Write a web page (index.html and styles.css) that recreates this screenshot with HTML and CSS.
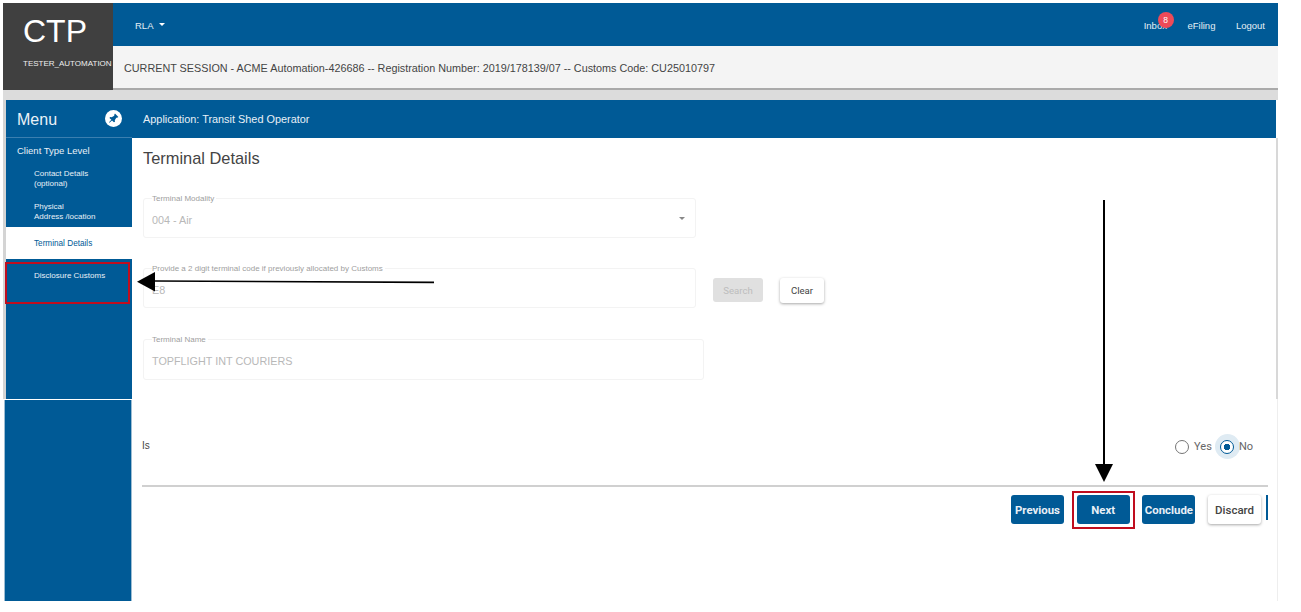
FILE: index.html
```html
<!DOCTYPE html>
<html lang="en">
<head>
<meta charset="utf-8">
<title>CTP - Terminal Details</title>
<link rel="stylesheet" href="styles.css">
</head>
<body>
<div class="app">
  <header class="top">
    <div class="logo">
      <div class="logo-name">CTP</div>
      <div class="logo-user">TESTER_AUTOMATION</div>
    </div>
    <div class="top-right">
      <nav class="nav">
        <div class="nav-left">RLA <span class="caret"></span></div>
        <div class="nav-links">
          <span class="inbox">Inbox<span class="badge">8</span></span>
          <span>eFiling</span>
          <span>Logout</span>
        </div>
      </nav>
      <div class="session">CURRENT SESSION - ACME Automation-426686 -- Registration Number: 2019/178139/07 -- Customs Code: CU25010797</div>
    </div>
  </header>

  <div class="work">
    <aside class="side">
      <div class="side-upper">
        <div class="menu-head">
          <span>Menu</span>
          <svg class="menu-icon" viewBox="0 0 16 16" aria-hidden="true"><circle cx="8" cy="8" r="8" fill="#fff"/><path d="M9.4 3.4 12.6 6.6 11.4 7.4 10.6 7.2 9.2 9.6 9.4 11 8.4 11.6 6.6 9.8 4.2 12 3.8 11.6 6 9.2 4.2 7.6 4.8 6.6 6.2 6.8 8.8 5.4 8.6 4.6z" fill="#005a96"/></svg>
        </div>
        <div class="menu-title">Client Type Level</div>
        <ul class="menu-list">
          <li class="item item-contact">Contact Details<br>(optional)</li>
          <li class="item item-physical">Physical<br>Address /location</li>
          <li class="item item-active">Terminal Details</li>
          <li class="item item-disclosure">Disclosure Customs</li>
        </ul>
      </div>
      <div class="side-lower"></div>
    </aside>

    <main class="main">
      <div class="app-bar">Application: Transit Shed Operator</div>
      <div class="panel">
        <h1 class="title">Terminal Details</h1>

        <fieldset class="field field-std">
          <legend>Terminal Modality</legend>
          <div class="value value-select">004 - Air <span class="select-caret"></span></div>
        </fieldset>

        <div class="field-row">
          <fieldset class="field field-std">
            <legend>Provide a 2 digit terminal code if previously allocated by Customs</legend>
            <div class="value">E8</div>
          </fieldset>
          <button class="btn btn-disabled" type="button">Search</button>
          <button class="btn btn-light btn-clear" type="button">Clear</button>
        </div>

        <fieldset class="field field-wide">
          <legend>Terminal Name</legend>
          <div class="value">TOPFLIGHT INT COURIERS</div>
        </fieldset>
      </div>

      <div class="panel-lower">
        <div class="question">
          <span>Is</span>
          <div class="radios">
            <span class="radio"></span><span class="radio-label">Yes</span>
            <span class="radio-halo"><span class="radio radio-on"></span></span><span class="radio-label radio-label-on">No</span>
          </div>
        </div>
        <div class="actions">
          <button class="btn btn-primary" type="button">Previous</button>
          <button class="btn btn-primary" type="button">Next</button>
          <button class="btn btn-primary" type="button">Conclude</button>
          <button class="btn btn-light btn-discard" type="button">Discard</button>
          <span class="sliver"></span>
        </div>
      </div>
    </main>
  </div>
</div>

<div class="mark mark-menu"></div>
<div class="mark mark-next"></div>
<svg class="arrow arrow-h" viewBox="0 0 298 20" aria-hidden="true"><path d="M18 9 297 10.4" stroke="#000" stroke-width="1.6" fill="none"/><path d="M0 9.7 18 0V19.5z" fill="#000"/></svg>
<svg class="arrow arrow-v" viewBox="0 0 20 283" aria-hidden="true"><path d="M10 0V266" stroke="#000" stroke-width="2" fill="none"/><path d="M1 264H19L10 282z" fill="#000"/></svg>
</body>
</html>
```
FILE: styles.css
```css
* { box-sizing: border-box; }
html, body { margin: 0; padding: 0; background: #fff; }
body {
  height: 612px;
  overflow: hidden;
  font-family: "Liberation Sans", Arial, sans-serif;
  color: #444;
}
.app { width: 1275px; margin: 3px 0 0 3px; }

/* top header */
.top { display: flex; height: 87px; }
.logo {
  width: 110px;
  background: #404040;
  color: #fff;
  padding-left: 20px;
}
.logo-name { font-size: 32px; line-height: 37px; margin-top: 10px; font-weight: 400; }
.logo-user { font-size: 8px; line-height: 10px; margin-top: 9px; color: #eee; white-space: nowrap; }
.top-right { flex: 1; display: flex; flex-direction: column; }
.nav {
  flex: none;
  height: 43px;
  background: #005a96;
  color: #e4eef5;
  display: flex;
  justify-content: space-between;
  align-items: center;
  font-size: 9.5px;
  padding: 0 13px 0 22px;
}
.nav-left { display: flex; align-items: center; gap: 5px; padding-top: 1px; }
.caret { width: 0; height: 0; border-left: 3.5px solid transparent; border-right: 3.5px solid transparent; border-top: 3.5px solid #fff; margin-left: 1px; margin-top: -2px; }
.nav-links { display: flex; gap: 20.5px; padding-top: 1px; }
.inbox { position: relative; }
.badge {
  position: absolute;
  left: 14px;
  top: -8px;
  width: 16px;
  height: 16px;
  border-radius: 50%;
  background: #ee4a58;
  color: #fff;
  font-size: 8.5px;
  line-height: 16px;
  text-align: center;
}
.session {
  flex: 1;
  background: #f4f4f4;
  border-bottom: 2px solid #aaa;
  font-size: 10.8px;
  line-height: 40px;
  padding: 2px 0 0 11px;
  color: #444;
  white-space: nowrap;
}

/* work area */
.work { display: flex; background: linear-gradient(#dcdcdc 10px, transparent 10px); padding-top: 10px; }
.side { width: 129px; display: flex; flex-direction: column; height: 501px; }
.side-upper { height: 299px; margin-left: 3px; background: #005a96; color: #e8f0f6; box-shadow: -3px 0 0 #d4d4d4; }
.side-lower { height: 201px; margin-top: 1px; margin-left: 1px; background: #005a96; border-right: 1px solid #9dbdd3; border-left: 1px solid #9dbdd3; }
.menu-head {
  height: 38px;
  display: flex;
  align-items: center;
  justify-content: space-between;
  padding: 2px 10px 0 11px;
  font-size: 16px;
  color: #eaf2f8;
  border-bottom: 1px solid #3b7fb0;
}
.menu-icon { width: 17px; height: 17px; margin-top: -2px; }
.menu-title { font-size: 9.5px; line-height: 10px; padding: 8px 0 0 11px; height: 23px; }
.menu-list { list-style: none; margin: 0; padding: 0; font-size: 8px; line-height: 9.5px; }
.item { padding-left: 28px; }
.item-contact { height: 30px; padding-top: 8px; }
.item-physical { height: 36px; padding-top: 11px; }
.item-active { height: 32px; line-height: 32px; padding-top: 1px; background: #fff; color: #005a96; font-size: 8.2px; }
.item-disclosure { padding-top: 12px; }

/* main */
.main { flex: 1; display: flex; flex-direction: column; min-width: 0; }
.app-bar {
  height: 38px;
  background: #005a96;
  color: #e8f0f6;
  font-size: 10.9px;
  line-height: 38px;
  padding-left: 11px;
  margin-right: 2px;
}
.panel {
  height: 261px;
  padding: 11px 0 0 11px;
  background: #fff;
  border-right: 2px solid #d8d8d8;
}
.title { margin: 0 0 31px; font-size: 16.4px; line-height: 19px; font-weight: 400; color: #444; }
.field {
  margin: 0;
  padding: 0 8px;
  border: 1px solid #f3f3f3;
  border-radius: 3px;
  height: 44px;
  min-inline-size: 0;
}
.field legend { font-size: 8px; line-height: 9px; color: #a0a0a0; padding: 0 2px 0 0; margin-left: 0; white-space: nowrap; }
.field-std { width: 553px; margin-top: -5px; }
.field-wide { width: 561px; height: 45px; margin-top: 27px; }
.field-row { display: flex; align-items: flex-start; margin-top: 31px; }
.value { font-size: 10.8px; line-height: 28px; padding-top: 3px; color: #b8b8b8; position: relative; }
.select-caret { position: absolute; right: 2px; top: 14px; width: 0; height: 0; border-left: 3px solid transparent; border-right: 3px solid transparent; border-top: 3px solid #888; }

.btn {
  font-family: Roboto, "Liberation Sans", sans-serif;
  font-size: 10px;
  height: 29px;
  width: 53px;
  padding: 0;
  border: 0;
  border-radius: 3px;
}
.btn-disabled { width: 50px; height: 24px; margin: 9px 0 0 17px; background: #e0e0e0; color: #bdbdbd; font-size: 9.6px; }
.btn-light { background: #fff; color: #444; box-shadow: 0 1px 3px rgba(0,0,0,.35); }
.btn-clear { width: 44px; height: 25px; margin: 9px 0 0 17px; font-size: 9.6px; }
.btn-discard { font-size: 11.5px; font-weight: 500; }
.btn-primary { background: #005a96; color: #e8f0f6; font-weight: 700; font-size: 11.4px; }

.panel-lower { flex: 1; padding: 0 9px 0 10px; background: #fff; border-right: 1px solid #eee; }
.question {
  height: 88px;
  display: flex;
  align-items: center;
  justify-content: space-between;
  border-bottom: 2px solid #d0d0d0;
  font-size: 10px;
  padding: 7px 15px 0 0;
}
.radios { display: flex; align-items: center; margin-top: 2px; font-family: Roboto, "Liberation Sans", sans-serif; font-size: 11px; color: #666; }
.radio { width: 14px; height: 14px; border: 1.5px solid #757575; border-radius: 50%; background: #fff; }
.radio-on { display: block; border-color: #005a96; background: radial-gradient(circle, #005a96 3px, #fff 3.5px); }
.radio-halo { width: 25px; height: 25px; border-radius: 50%; background: #dfebf3; display: flex; align-items: center; justify-content: center; margin-right: -1px; }
.radio-label { margin: 0 3px 0 5px; }
.radio-label-on { margin: 0; }
.actions { display: flex; align-items: flex-start; padding: 8px 0 0 869px; gap: 12.7px; }
.sliver { width: 2px; height: 25px; background: #005a96; margin-left: -8px; }

/* annotations laid over the screenshot */
.mark { position: absolute; border: 2px solid #c00d1e; }
.mark-menu { left: 5px; top: 262px; width: 125px; height: 42px; }
.mark-next { left: 1072px; top: 491px; width: 63px; height: 38px; }
.arrow { position: absolute; display: block; overflow: visible; }
.arrow-h { left: 137px; top: 272px; width: 298px; height: 20px; }
.arrow-v { left: 1094px; top: 200px; width: 20px; height: 283px; }
```
